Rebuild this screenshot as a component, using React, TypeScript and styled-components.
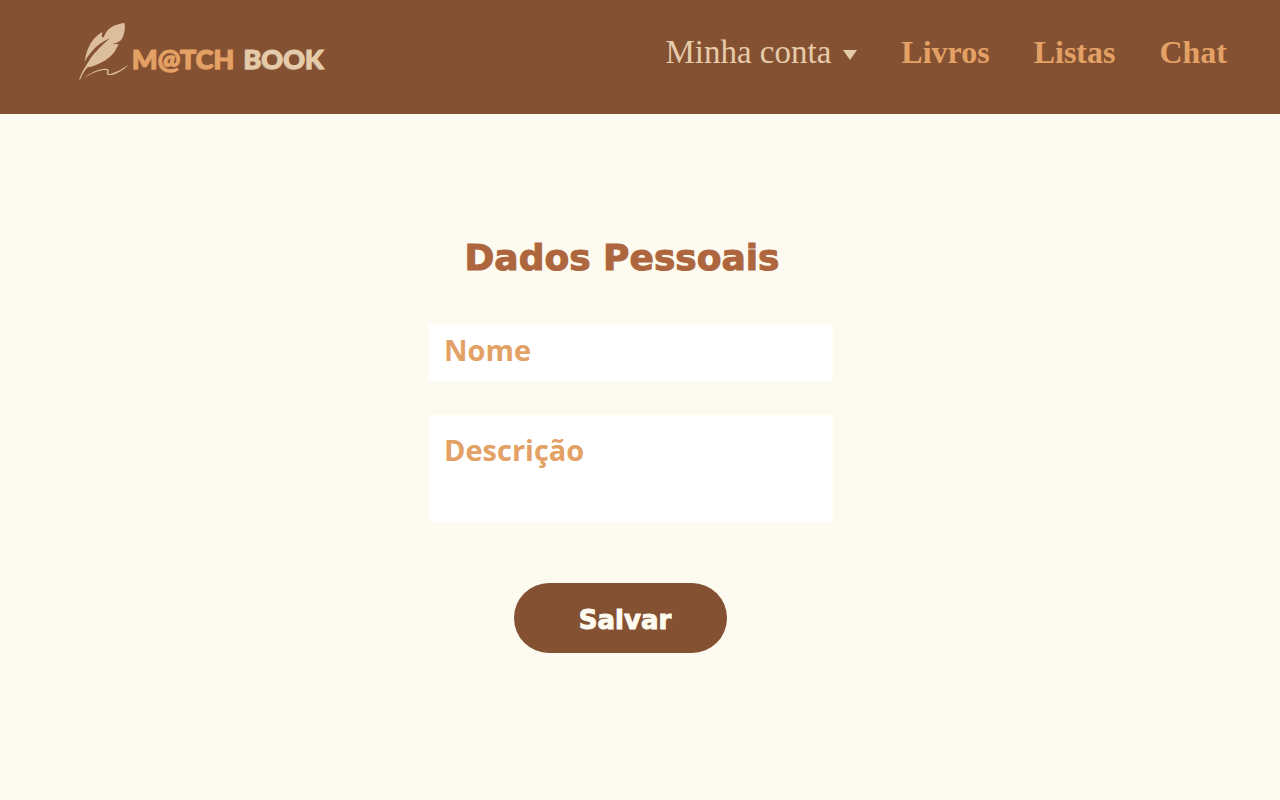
import React from "react";
import styled, { createGlobalStyle } from "styled-components";

const color = {
  brown: "#845132",
  cream: "#fdfaef",
  sand: "#e5cbaa",
  quill: "#dcbd9e",
  orange: "#e4a165",
  rust: "#ad663d",
};

const GlobalStyle = createGlobalStyle`
  *, *::before, *::after { box-sizing: border-box; }
  body {
    margin: 0;
    background: ${color.cream};
    font-family: "Open Sans", "Noto Sans", sans-serif;
  }
`;

const Header = styled.header`
  display: flex;
  justify-content: space-between;
  align-items: flex-start;
  min-height: 114px;
  padding: 18px 53px 20px 75px;
  background: ${color.brown};
`;

const Brand = styled.a`
  display: flex;
  align-items: flex-start;
  text-decoration: none;
`;

const Quill = styled.svg`
  width: 60px;
  height: 66px;
  flex: none;
  fill: ${color.quill};
`;

const BrandName = styled.span`
  display: flex;
  gap: 9px;
  margin: 23px 0 0 -3px;
  font: 900 27px/36px Lato, sans-serif;
  white-space: nowrap;
`;

const BrandWord = styled.span<{ $tone: string; $shade: string }>`
  color: ${(p) => p.$tone};
  -webkit-text-stroke: 1px ${(p) => p.$tone};
  text-shadow: -1px 1px 0 ${(p) => p.$shade};
`;

const Nav = styled.nav`
  display: flex;
  align-items: baseline;
  gap: 44px;
  padding-top: 16px;
`;

const navText = `
  font-family: "Liberation Serif", serif;
  line-height: 36px;
  white-space: nowrap;
`;

const AccountButton = styled.button`
  ${navText}
  display: flex;
  align-items: center;
  gap: 12px;
  padding: 0;
  border: 0;
  background: none;
  color: ${color.sand};
  font-size: 33px;
  cursor: pointer;
`;

const Caret = styled.svg`
  width: 14px;
  height: 10px;
  margin-top: 6px;
  fill: ${color.sand};
`;

const NavLink = styled.a`
  ${navText}
  color: ${color.orange};
  font-size: 32px;
  font-weight: 700;
  text-decoration: none;
`;

const Main = styled.main`
  display: flex;
  justify-content: center;
  padding: 120px 18px 40px 0;
`;

const Form = styled.form`
  display: flex;
  flex-direction: column;
  width: 100%;
  max-width: 404px;
`;

const displayFont = `"DejaVu Sans", sans-serif`;

const Title = styled.h1`
  margin: 0 18px 42px 0;
  color: ${color.rust};
  font: 700 36px/48px ${displayFont};
  -webkit-text-stroke: 1px ${color.rust};
  text-align: center;
  white-space: nowrap;
`;

const fieldStyle = `
  display: block;
  width: 100%;
  border: 0;
  border-radius: 2px;
  outline: 0;
  background: #fff;
  color: ${color.orange};
  font: 700 29px/40px "Open Sans", "Noto Sans", sans-serif;
  &::placeholder { color: ${color.orange}; opacity: 1; }
`;

const TextField = styled.input`
  ${fieldStyle}
  height: 57px;
  padding: 0 15px 6px;
  margin-bottom: 34px;
`;

const TextArea = styled.textarea`
  ${fieldStyle}
  height: 107px;
  padding: 15px;
  margin-bottom: 61px;
  resize: none;
`;

const SaveButton = styled.button`
  align-self: center;
  width: 213px;
  height: 70px;
  margin-right: 22px;
  padding: 4px 0 0 10px;
  border: 0;
  border-radius: 35px;
  background: ${color.brown};
  color: ${color.cream};
  font: 700 26px/36px ${displayFont};
  -webkit-text-stroke: 1px ${color.cream};
  cursor: pointer;
`;

const links = ["Livros", "Listas", "Chat"];

export default function App() {
  return (
    <>
      <GlobalStyle />
      <Header>
        <Brand href="#" aria-label="M@tch Book">
          <Quill viewBox="0 0 180 198" aria-hidden="true">
            <path d="M149 15C128 17 106 26 96 39C91 46 88 53 86 58L80 57L82 42C55 57 34 88 29 132C43 103 74 72 105 61C84 78 58 104 43 127C27 151 17 170 12 186L16 184C22 170 29 157 38 148C65 143 98 128 119 101L131 79L112 78C128 74 135 70 140 64C149 49 151 31 149 15Z" />
            <path d="M27 180C44 165 68 155 85 153C98 151 104 155 101 161C98 167 101 169 108 167C127 162 145 150 161 140C147 155 124 169 107 171C96 172 93 167 97 161C100 156 90 155 81 157C62 161 43 170 27 180Z" />
          </Quill>
          <BrandName>
            <BrandWord $tone={color.orange} $shade="#b96d40">M@TCH</BrandWord>
            <BrandWord $tone={color.sand} $shade="#a58466">BOOK</BrandWord>
          </BrandName>
        </Brand>
        <Nav>
          <AccountButton type="button" aria-haspopup="menu">
            Minha conta
            <Caret viewBox="0 0 14 10" aria-hidden="true">
              <path d="M0 0H14L7 10Z" />
            </Caret>
          </AccountButton>
          {links.map((label) => (
            <NavLink key={label} href="#">
              {label}
            </NavLink>
          ))}
        </Nav>
      </Header>
      <Main>
        <Form onSubmit={(e) => e.preventDefault()}>
          <Title>Dados Pessoais</Title>
          <TextField type="text" name="nome" aria-label="Nome" placeholder="Nome" />
          <TextArea name="descricao" aria-label="Descrição" placeholder="Descrição" />
          <SaveButton type="submit">Salvar</SaveButton>
        </Form>
      </Main>
    </>
  );
}
